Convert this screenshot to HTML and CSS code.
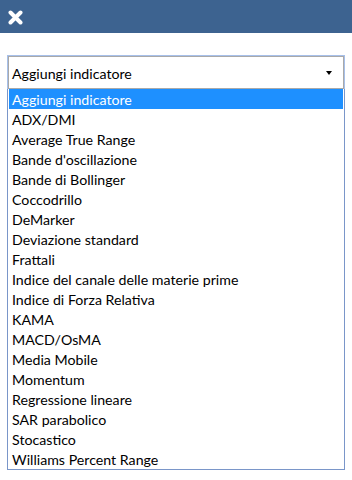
FILE: index.html
```html
<!DOCTYPE html>
<html lang="it">
<head>
  <meta charset="UTF-8">
  <meta name="viewport" content="width=device-width, initial-scale=1.0">
  <title>Aggiungi indicatore</title>
  <link rel="stylesheet" href="styles.css">
</head>
<body>
  <div class="topbar">
    <button class="close-btn" aria-label="Chiudi">
      <svg width="15" height="15" viewBox="0 0 15 15">
        <path d="M2.5 2.5 L12.5 12.5 M12.5 2.5 L2.5 12.5" stroke="#fff" stroke-width="4" stroke-linecap="round"/>
      </svg>
    </button>
  </div>

  <div class="panel">
    <div class="picker">
      <div class="select">
        <span>Aggiungi indicatore</span>
        <span class="caret"></span>
      </div>
      <ul class="options">
        <li class="selected">Aggiungi indicatore</li>
        <li>ADX/DMI</li>
        <li>Average True Range</li>
        <li>Bande d'oscillazione</li>
        <li>Bande di Bollinger</li>
        <li>Coccodrillo</li>
        <li>DeMarker</li>
        <li>Deviazione standard</li>
        <li>Frattali</li>
        <li>Indice del canale delle materie prime</li>
        <li>Indice di Forza Relativa</li>
        <li>KAMA</li>
        <li>MACD/OsMA</li>
        <li>Media Mobile</li>
        <li>Momentum</li>
        <li>Regressione lineare</li>
        <li>SAR parabolico</li>
        <li>Stocastico</li>
        <li>Williams Percent Range</li>
      </ul>
    </div>
  </div>
</body>
</html>
```

FILE: styles.css
```css
body {
  margin: 0;
  font-family: Lato, "Open Sans", Arial, sans-serif;
  font-size: 14.2px;
  color: #000;
  background-color: #fff;
}
.topbar {
  height: 33px;
  background-color: #3d6390;
  display: flex;
  align-items: center;
  padding-left: 8px;
}
.close-btn {
  border: none;
  background: none;
  padding: 0;
  margin-top: 1px;
  display: flex;
  cursor: pointer;
}
.panel {
  padding: 22px 7px;
}
.picker {
  border: 1px solid #a7c0ea;
  border-bottom: none;
}
.select {
  height: 30px;
  border: 1px solid #a9a9a9;
  display: flex;
  align-items: center;
  justify-content: space-between;
  padding: 1px 11px 0 3px;
}
.caret {
  width: 0;
  height: 0;
  border-left: 3px solid transparent;
  border-right: 3px solid transparent;
  border-top: 4px solid #000;
}
.options {
  list-style: none;
  margin: 0 -1px;
  padding: 0 1px;
  border: 1px solid #7a96c9;
  border-top: none;
}
.options li {
  height: 20px;
  line-height: 22px;
  padding-left: 3px;
  white-space: nowrap;
  overflow: hidden;
}
.options .selected {
  background-color: #1e90ff;
  color: #fff;
}
```
